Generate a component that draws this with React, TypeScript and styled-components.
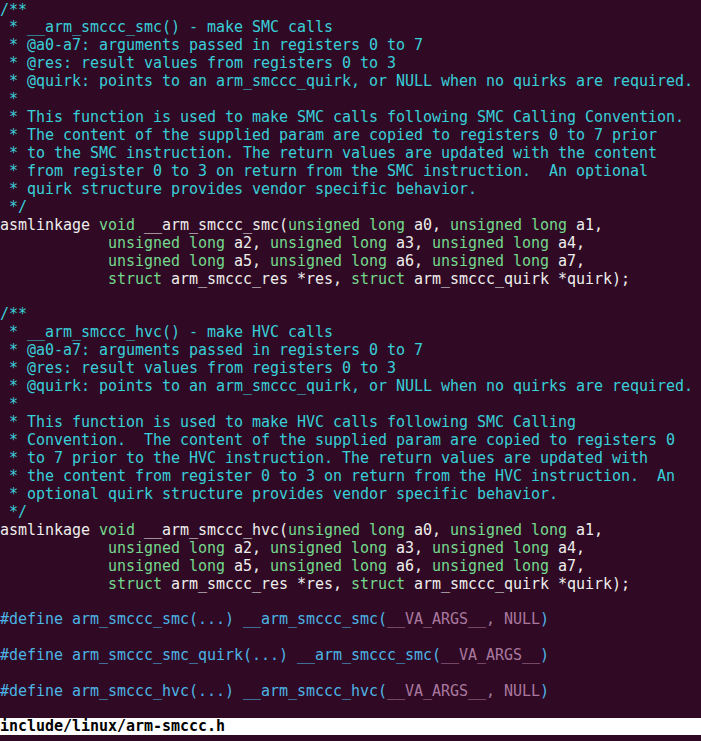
import React from "react";
import styled, { createGlobalStyle } from "styled-components";

const Global = createGlobalStyle`
  html, body { margin: 0; padding: 0; background: #300a24; }
  #root { min-height: 741px; }
`;

type Kind = "n" | "c" | "t" | "p" | "k";
type Tok = [Kind, string];

const Screen = styled.div`
  display: flex;
  flex-direction: column;
  width: 701px;
  height: 741px;
  overflow: hidden;
  background: #300a24;
  font-family: "DejaVu Sans Mono", "Liberation Mono", monospace;
  font-size: 15px;
  letter-spacing: -0.03px;
  color: #eeeeec;
`;

const Line = styled.div`
  box-sizing: border-box;
  height: 17.95px;
  padding-top: 1.5px;
  line-height: 16.45px;
  white-space: pre;
`;

const colors: Record<Kind, string> = {
  n: "#eeeeec",
  c: "#38cfd9",
  t: "#74d98c",
  p: "#4cb4e4",
  k: "#a9789f",
};

const Token = styled.span<{ $kind: Kind }>`
  color: ${(p) => colors[p.$kind]};
`;

const StatusBar = styled.div`
  height: 17.95px;
  line-height: 17.95px;
  background: #ffffff;
  color: #000000;
  font-weight: bold;
  white-space: pre;
`;

const c = (s: string): Tok[] => [["c", s]];
const UL: Tok = ["t", "unsigned long"];

const protoLines = (name: string): Tok[][] => [
  [["n", "asmlinkage "], ["t", "void"], ["n", ` ${name}(`], UL, ["n", " a0, "], UL, ["n", " a1,"]],
  [["n", "            "], UL, ["n", " a2, "], UL, ["n", " a3, "], UL, ["n", " a4,"]],
  [["n", "            "], UL, ["n", " a5, "], UL, ["n", " a6, "], UL, ["n", " a7,"]],
  [["n", "            "], ["t", "struct"], ["n", " arm_smccc_res *res, "], ["t", "struct"], ["n", " arm_smccc_quirk *quirk);"]],
];

const lines: Tok[][] = [
  c("/**"),
  c(" * __arm_smccc_smc() - make SMC calls"),
  c(" * @a0-a7: arguments passed in registers 0 to 7"),
  c(" * @res: result values from registers 0 to 3"),
  c(" * @quirk: points to an arm_smccc_quirk, or NULL when no quirks are required."),
  c(" *"),
  c(" * This function is used to make SMC calls following SMC Calling Convention."),
  c(" * The content of the supplied param are copied to registers 0 to 7 prior"),
  c(" * to the SMC instruction. The return values are updated with the content"),
  c(" * from register 0 to 3 on return from the SMC instruction.  An optional"),
  c(" * quirk structure provides vendor specific behavior."),
  c(" */"),
  ...protoLines("__arm_smccc_smc"),
  [],
  c("/**"),
  c(" * __arm_smccc_hvc() - make HVC calls"),
  c(" * @a0-a7: arguments passed in registers 0 to 7"),
  c(" * @res: result values from registers 0 to 3"),
  c(" * @quirk: points to an arm_smccc_quirk, or NULL when no quirks are required."),
  c(" *"),
  c(" * This function is used to make HVC calls following SMC Calling"),
  c(" * Convention.  The content of the supplied param are copied to registers 0"),
  c(" * to 7 prior to the HVC instruction. The return values are updated with"),
  c(" * the content from register 0 to 3 on return from the HVC instruction.  An"),
  c(" * optional quirk structure provides vendor specific behavior."),
  c(" */"),
  ...protoLines("__arm_smccc_hvc"),
  [],
  [["p", "#define arm_smccc_smc(...) __arm_smccc_smc("], ["k", "__VA_ARGS__, NULL"], ["p", ")"]],
  [],
  [["p", "#define arm_smccc_smc_quirk(...) __arm_smccc_smc("], ["k", "__VA_ARGS__"], ["p", ")"]],
  [],
  [["p", "#define arm_smccc_hvc(...) __arm_smccc_hvc("], ["k", "__VA_ARGS__, NULL"], ["p", ")"]],
  [],
];

export default function App() {
  return (
    <>
      <Global />
      <Screen>
        {lines.map((toks, i) => (
          <Line key={i}>
            {toks.length === 0
              ? " "
              : toks.map(([k, s], j) => (
                  <Token key={j} $kind={k}>
                    {s}
                  </Token>
                ))}
          </Line>
        ))}
        <StatusBar>include/linux/arm-smccc.h</StatusBar>
      </Screen>
    </>
  );
}
